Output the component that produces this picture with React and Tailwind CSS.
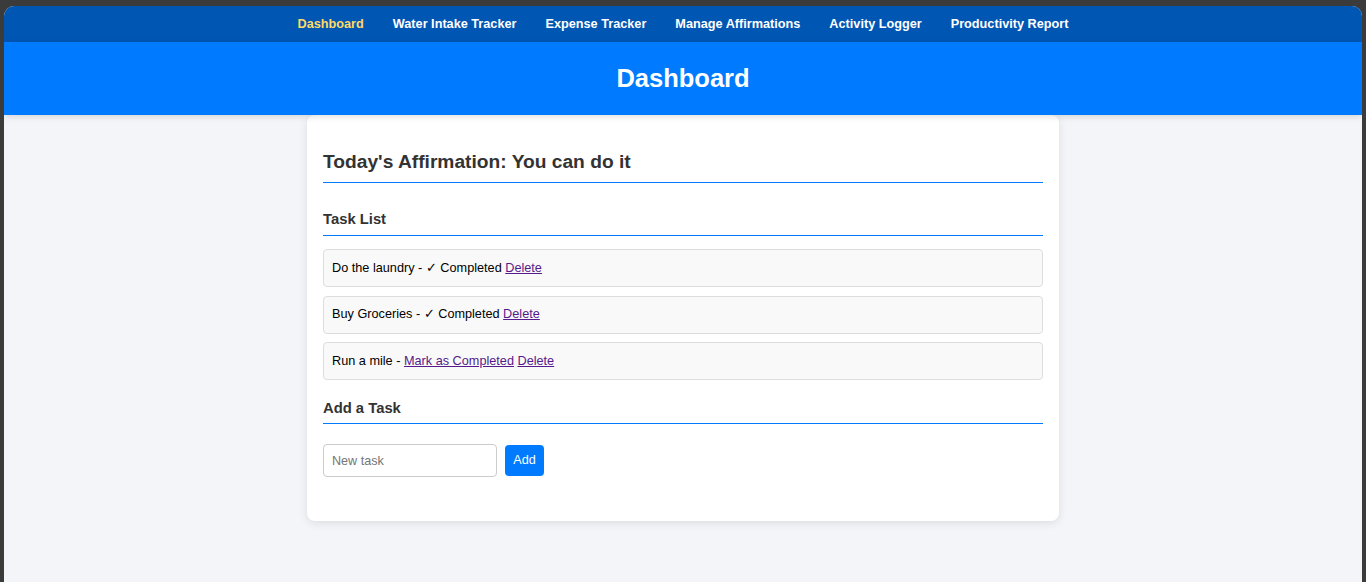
import { useState } from 'react';

const navLinks = [
  'Dashboard',
  'Water Intake Tracker',
  'Expense Tracker',
  'Manage Affirmations',
  'Activity Logger',
  'Productivity Report',
];

export default function App() {
  const [tasks] = useState([
    { id: 1, text: 'Do the laundry', completed: true },
    { id: 2, text: 'Buy Groceries', completed: true },
    { id: 3, text: 'Run a mile', completed: false },
  ]);

  return (
    <div className="min-h-screen bg-[#3b3b3b] pt-[6px] px-[4px] font-['Liberation_Sans',Arial,sans-serif]">
      <div className="min-h-[576px] bg-[#f4f5f9] rounded-t-[10px] overflow-hidden">
        {/* Navbar */}
        <nav className="h-[36px] pt-[2px] bg-[#0056b3] flex items-center justify-center gap-[29px]">
          {navLinks.map((link, i) => (
            <a
              key={link}
              href="#"
              className={`text-[12.7px] font-bold ${i === 0 ? 'text-[#ffd966]' : 'text-white'}`}
            >
              {link}
            </a>
          ))}
        </nav>

        {/* Header */}
        <header className="h-[73px] bg-[#007bff] flex items-center justify-center shadow-[0_2px_6px_rgba(0,0,0,0.12)] relative">
          <h1 className="text-[25.5px] font-bold text-white">Dashboard</h1>
        </header>

        {/* Main card */}
        <main className="flex justify-center">
          <div className="w-[752px] bg-white rounded-[8px] shadow-[0_2px_10px_rgba(0,0,0,0.1)] px-[16px] pt-[36px] pb-[44px]">
            <h2 className="text-[19.2px] leading-[22px] font-bold text-[#333] pb-[9px] border-b border-[#007bff]">
              Today's Affirmation: You can do it
            </h2>

            <h3 className="mt-[27px] text-[14.8px] leading-[18px] font-bold text-[#333] pb-[7px] border-b border-[#007bff]">
              Task List
            </h3>

            <ul className="mt-[13px] flex flex-col gap-[8.5px]">
              {tasks.map((task) => (
                <li
                  key={task.id}
                  className="h-[38px] flex items-center px-[8px] pt-[1px] bg-[#f9f9f9] border border-[#ddd] rounded-[4px] text-[12.7px] text-black"
                >
                  <span>
                    {task.text} -{' '}
                    {task.completed ? (
                      '✓ Completed'
                    ) : (
                      <a href="#" className="text-[#551a8b] underline">
                        Mark as Completed
                      </a>
                    )}{' '}
                    <a href="#" className="text-[#551a8b] underline">
                      Delete
                    </a>
                  </span>
                </li>
              ))}
            </ul>

            <h3 className="mt-[19px] text-[14.8px] leading-[18px] font-bold text-[#333] pb-[6px] border-b border-[#007bff]">
              Add a Task
            </h3>

            <div className="mt-[20px] flex items-center gap-[8px]">
              <input
                type="text"
                placeholder="New task"
                className="w-[174px] h-[33px] px-[8px] border border-[#ccc] rounded-[4px] text-[12.6px] placeholder:text-[#757575] outline-none"
              />
              <button className="w-[39px] h-[31px] bg-[#007bff] text-white text-[12.6px] rounded-[4px]">
                Add
              </button>
            </div>
          </div>
        </main>
      </div>
    </div>
  );
}
